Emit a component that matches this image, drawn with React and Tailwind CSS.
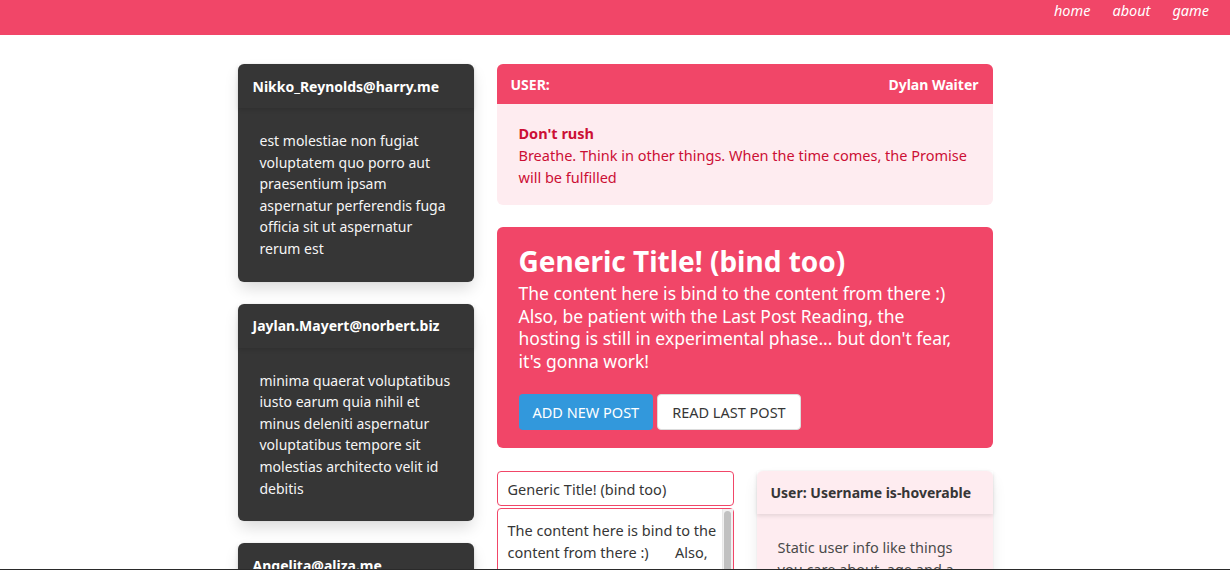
import React from 'react';

const users = [
  {
    email: 'Nikko_Reynolds@harry.me',
    body: 'est molestiae non fugiat voluptatem quo porro aut praesentium ipsam aspernatur perferendis fuga officia sit ut aspernatur rerum est',
  },
  {
    email: 'Jaylan.Mayert@norbert.biz',
    body: 'minima quaerat voluptatibus iusto earum quia nihil et minus deleniti aspernatur voluptatibus tempore sit molestias architecto velit id debitis',
  },
  {
    email: 'Angelita@aliza.me',
    body: 'quia molestiae reprehenderit quasi aspernatur aut expedita occaecati aliquam eveniet laudantium',
  },
];

const UserCard = ({ email, body }) => (
  <div className="bg-[#363636] rounded-md shadow-[0_8px_16px_-2px_rgba(10,10,10,0.15),0_0_0_1px_rgba(10,10,10,0.02)]">
    <header className="h-[44px] flex items-center px-[15px] shadow-[0_2px_4px_rgba(10,10,10,0.1)]">
      <p className="text-white font-bold text-[14px]">{email}</p>
    </header>
    <div className="pl-[22px] pr-[18px] pt-[22px] pb-[22px] text-[#f5f5f5] text-[14px] leading-[21.6px]">
      {body}
    </div>
  </div>
);

const App = () => (
  <div className="h-screen overflow-hidden bg-white font-['Noto_Sans',sans-serif] text-[#4a4a4a]">
    {/* Navbar */}
    <nav className="h-[35px] bg-[#f14668] flex justify-end items-start pr-[21px]">
      <div className="flex gap-[22px] text-white italic text-[14.5px] leading-[20px]">
        <a href="#">home</a>
        <a href="#">about</a>
        <a href="#">game</a>
      </div>
    </nav>

    <div className="w-[755px] mx-auto pt-[29px] flex gap-[23px]">
      {/* Left column: users */}
      <div className="w-[236px] flex flex-col gap-[22px] shrink-0">
        {users.map((u) => (
          <UserCard key={u.email} {...u} />
        ))}
      </div>

      {/* Right column */}
      <div className="w-[496px] flex flex-col">
        {/* Message */}
        <article className="rounded-md overflow-hidden bg-[#feecf0]">
          <div className="h-[40px] bg-[#f14668] flex items-center justify-between px-[14px] text-white font-bold text-[14px]">
            <p>USER:</p>
            <p>Dylan Waiter</p>
          </div>
          <div className="px-[22px] pt-[18px] pb-[17px] text-[#cc0f35] text-[14.5px] leading-[22px]">
            <p className="font-bold">Don't rush</p>
            <p>Breathe. Think in other things. When the time comes, the Promise will be fulfilled</p>
          </div>
        </article>

        {/* Hero */}
        <section className="mt-[22px] bg-[#f14668] rounded-md px-[22px] pt-[16px] pb-[18px] text-white">
          <h1 className="text-[28px] font-bold leading-[36px]">Generic Title! (bind too)</h1>
          <p className="text-[17.5px] leading-[22.6px] mt-[3px]">
            The content here is bind to the content from there :) Also, be patient with the Last Post Reading, the hosting is still in experimental phase... but don't fear, it's gonna work!
          </p>
          <div className="flex gap-[4px] mt-[22px]">
            <button className="h-[36px] px-[14px] rounded bg-[#3298dc] text-white text-[14.5px]">ADD NEW POST</button>
            <button className="h-[36px] px-[14px] rounded bg-white text-[#363636] text-[14.5px] border border-[#dbdbdb]">READ LAST POST</button>
          </div>
        </section>

        {/* Bottom row */}
        <div className="mt-[23px] flex gap-[23px]">
          <div className="w-[237px] flex flex-col gap-[2px]">
            <input
              className="h-[35px] border border-[#f14668] rounded px-[10px] text-[14.5px] text-[#363636] outline-none"
              defaultValue="Generic Title! (bind too)"
            />
            <div className="relative">
              <textarea
                rows={6}
                className="block w-full border border-[#f14668] rounded pl-[10px] pr-[16px] pt-[10px] text-[14.5px] leading-[22px] text-[#363636] resize-none overflow-hidden outline-none"
                defaultValue={"The content here is bind to the content from there :)       Also, be patient with the Last Post Reading, the hosting is still in experimental phase... but don't fear, it's gonna work!"}
              />
              {/* scrollbar */}
              <div className="absolute top-[1px] right-[1px] bottom-[1px] w-[11px] bg-[#f1f1f1] border-l border-[#e8e8e8]">
                <div className="mx-auto mt-[2px] w-[7px] h-[80px] rounded-full bg-[#c1c1c1]"></div>
              </div>
            </div>
          </div>
          <div className="w-[236px] bg-[#feecf0] rounded-md shadow-[0_8px_16px_-2px_rgba(10,10,10,0.1),0_0_0_1px_rgba(10,10,10,0.02)]">
            <header className="h-[43px] flex items-center px-[14px] shadow-[0_2px_4px_rgba(10,10,10,0.1)]">
              <p className="font-bold text-[14px] text-[#363636]">User: Username is-hoverable</p>
            </header>
            <div className="px-[21px] pt-[22px] text-[14.5px] leading-[22px] text-[#4a4a4a]">
              Static user info like things you care about, age and a little description of yourself.
            </div>
          </div>
        </div>
      </div>
    </div>

    {/* window edge */}
    <div className="fixed bottom-0 left-0 right-0 h-px bg-[#2a2a2a]"></div>
  </div>
);

export default App;
